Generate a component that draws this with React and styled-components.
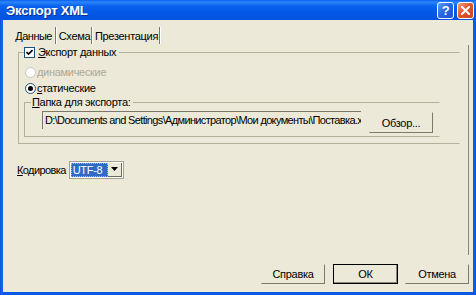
import React from "react";
import styled, { createGlobalStyle } from "styled-components";

const GlobalStyle = createGlobalStyle`
  html, body {
    margin: 0;
    padding: 0;
    background: #ece9d8;
  }
  * {
    box-sizing: border-box;
  }
`;

const StyledWindow = styled.div`
  width: 476px;
  height: 295px;
  display: flex;
  flex-direction: column;
  background: linear-gradient(to right, #0a4fd6 0px, #1a6cf0 2px, #0a5ae6 3px);
  padding: 0 3px 3px 3px;
  font-family: "Liberation Sans", Arial, sans-serif;
  font-size: 11px;
  letter-spacing: -0.3px;
  color: #000;
`;

const StyledTitleBar = styled.div`
  height: 22px;
  margin: 0 -3px;
  padding: 0 2px 0 6px;
  display: flex;
  align-items: center;
  background: linear-gradient(
    to bottom,
    #0a5ff0 0%,
    #2b86fb 10%,
    #0a62ef 30%,
    #0558e6 60%,
    #0452df 100%
  );
`;

const StyledTitle = styled.span`
  flex: 1;
  color: #fff;
  font-weight: bold;
  font-size: 13px;
  letter-spacing: -0.2px;
  text-shadow: 1px 1px 0 #0a2f9a;
`;

const StyledTitleButton = styled.div`
  width: 17px;
  height: 17px;
  margin-left: 3px;
  border: 1px solid #fff;
  border-radius: 3px;
  display: flex;
  align-items: center;
  justify-content: center;
  color: #fff;
  font-weight: bold;
  font-size: 13px;
  background: ${(props) =>
    props.close
      ? "linear-gradient(135deg, #f0a07a 0%, #e2572c 45%, #c9441e 100%)"
      : "linear-gradient(135deg, #5f9dfb 0%, #2464e4 50%, #1d55d4 100%)"};
`;

const StyledClient = styled.div`
  flex: 1;
  display: flex;
  flex-direction: column;
  background: #ece9d8;
  padding: 5px 4px 8px 2px;
`;

const StyledTabStrip = styled.div`
  height: 19px;
  display: flex;
`;

const StyledTab = styled.div`
  width: ${(props) => props.w}px;
  height: 17px;
  margin-top: 2px;
  display: flex;
  align-items: center;
  justify-content: ${(props) => (props.active ? "flex-end" : "center")};
  padding-right: ${(props) => (props.active ? "3px" : "0")};
  border-right: 1px solid #7d7a6c;
  box-shadow: 1px 0 0 #fff;
  margin-right: 2px;
  letter-spacing: ${(props) => (props.active ? "-0.5px" : "-0.3px")};
`;

const StyledPanel = styled.div`
  height: 210px;
  border-right: 1px solid #8a8675;
  margin-top: 1px;
  padding: 1px 8px 0 13px;
  display: flex;
  flex-direction: column;
`;

const StyledGroup = styled.fieldset`
  margin: 0 0 0 ${(props) => props.offset || 0}px;
  width: ${(props) => props.w}px;
  padding: 0 0 ${(props) => props.bottom}px ${(props) => props.left}px;
  border: 1px solid #b3b09c;
  border-right-color: transparent;
  min-width: 0;
`;

const StyledLegend = styled.legend`
  display: flex;
  align-items: center;
  height: 13px;
  line-height: 13px;
  padding: 0 3px 0 ${(props) => props.pad || 0}px;
  margin-left: ${(props) => props.shift || 0}px;
`;

const StyledCheck = styled.span`
  width: 11px;
  height: 11px;
  border: 1px solid #1c5180;
  background: #fff;
  display: inline-flex;
  align-items: center;
  justify-content: center;
  margin-right: 3px;
`;

const StyledRadioRow = styled.div`
  height: 16px;
  display: flex;
  align-items: center;
  margin-top: ${(props) => props.top || 0}px;
  color: ${(props) => (props.disabled ? "#aca899" : "#000")};
`;

const StyledRadio = styled.span`
  width: 11px;
  height: 11px;
  border-radius: 50%;
  border: 1px solid ${(props) => (props.disabled ? "#cac8bb" : "#1c5180")};
  background: #fff;
  margin-right: 1px;
  display: inline-flex;
  align-items: center;
  justify-content: center;

  &::after {
    content: "";
    width: 5px;
    height: 5px;
    border-radius: 50%;
    background: ${(props) => (props.checked ? "#000" : "transparent")};
  }
`;

const StyledU = styled.span`
  text-decoration: underline;
`;

const StyledPathRow = styled.div`
  display: flex;
  align-items: flex-start;
  margin-top: 2px;
  height: 21px;
  padding-left: 17px;
`;

const StyledPathField = styled.div`
  flex: 0 0 319px;
  height: 18px;
  border-top: 1px solid #7a7868;
  border-left: 1px solid #7a7868;
  background: #ece9d8;
  padding: 2px 0 0 2px;
  white-space: nowrap;
  overflow: hidden;
  letter-spacing: -0.65px;
`;

const StyledButton = styled.div`
  flex: 0 0 auto;
  width: ${(props) => props.w || 64}px;
  height: ${(props) => props.h || 20}px;
  margin-top: ${(props) => props.top || 0}px;
  margin-left: ${(props) => props.gap || 0}px;
  display: flex;
  align-items: center;
  justify-content: center;
  border: 1px solid ${(props) => (props.primary ? "#000" : "transparent")};
  border-right-color: ${(props) => (props.primary ? "#000" : "#7d7a6c")};
  border-bottom-color: ${(props) => (props.primary ? "#000" : "#7d7a6c")};
  box-shadow: ${(props) =>
    props.primary ? "inset -1px -1px 0 #8a8675" : "none"};
`;

const StyledEncodingRow = styled.div`
  display: flex;
  align-items: center;
  margin-top: 17px;
  margin-left: -1px;
  height: 17px;
`;

const StyledEncodingLabel = styled.span`
  letter-spacing: -0.6px;
`;

const StyledCombo = styled.div`
  width: 55px;
  height: 18px;
  margin-left: 3px;
  display: flex;
  border: 1px solid #a5a290;
  padding: 1px;
  background: #fff;
`;

const StyledComboValue = styled.div`
  flex: 1;
  background: #316ac5;
  color: #fff;
  outline: 1px dotted #e8b43c;
  outline-offset: -1px;
  padding-left: 2px;
  line-height: 14px;
`;

const StyledComboArrow = styled.div`
  width: 14px;
  display: flex;
  align-items: center;
  justify-content: center;
  background: #ece9d8;
  border-right: 1px solid #6b695c;
  border-bottom: 1px solid #6b695c;
`;

const StyledFooter = styled.div`
  display: flex;
  justify-content: flex-end;
  margin-top: 9px;
`;

const App = () => {
  return (
    <>
      <GlobalStyle />
      <StyledWindow>
        <StyledTitleBar>
          <StyledTitle>Экспорт XML</StyledTitle>
          <StyledTitleButton>?</StyledTitleButton>
          <StyledTitleButton close>
            <svg width="9" height="9" viewBox="0 0 9 9">
              <path
                d="M1 1 L8 8 M8 1 L1 8"
                stroke="#fff"
                strokeWidth="2"
                strokeLinecap="square"
              />
            </svg>
          </StyledTitleButton>
        </StyledTitleBar>

        <StyledClient>
          <StyledTabStrip>
            <StyledTab w={51} active>
              Данные
            </StyledTab>
            <StyledTab w={34}>Схема</StyledTab>
            <StyledTab w={66}>Презентация</StyledTab>
          </StyledTabStrip>

          <StyledPanel>
            <StyledGroup w={442} left={6} bottom={6}>
              <StyledLegend shift={-1}>
                <StyledCheck>
                  <svg width="7" height="7" viewBox="0 0 7 7">
                    <path
                      d="M0.5 3 L2.5 5 L6.5 1"
                      stroke="#000"
                      strokeWidth="1.6"
                      fill="none"
                    />
                  </svg>
                </StyledCheck>
                <StyledU>Э</StyledU>кспорт данных
              </StyledLegend>

              <StyledRadioRow top={5} disabled>
                <StyledRadio disabled />
                динамические
              </StyledRadioRow>
              <StyledRadioRow>
                <StyledRadio checked />
                <StyledU>с</StyledU>татические
              </StyledRadioRow>

              <StyledGroup w={416} offset={-1} left={0} bottom={4}>
                <StyledLegend shift={6} pad={1}>
                  <span>
                    <StyledU>П</StyledU>апка для экспорта:
                  </span>
                </StyledLegend>
                <StyledPathRow>
                  <StyledPathField>
                    D:\Documents and Settings\Администратор\Мои
                    документы\Поставка.xml
                  </StyledPathField>
                  <StyledButton w={64} h={21} gap={8} top={1}>
                    Обзор...
                  </StyledButton>
                </StyledPathRow>
              </StyledGroup>
            </StyledGroup>

            <StyledEncodingRow>
              <StyledEncodingLabel>
                <StyledU>К</StyledU>одировка
              </StyledEncodingLabel>
              <StyledCombo>
                <StyledComboValue>UTF-8</StyledComboValue>
                <StyledComboArrow>
                  <svg width="7" height="4" viewBox="0 0 7 4">
                    <path d="M0 0 H7 L3.5 4 Z" fill="#000" />
                  </svg>
                </StyledComboArrow>
              </StyledCombo>
            </StyledEncodingRow>
          </StyledPanel>

          <StyledFooter>
            <StyledButton w={64}>Справка</StyledButton>
            <StyledButton w={65} gap={8} primary>
              ОК
            </StyledButton>
            <StyledButton w={64} gap={7}>
              Отмена
            </StyledButton>
          </StyledFooter>
        </StyledClient>
      </StyledWindow>
    </>
  );
};

export default App;
